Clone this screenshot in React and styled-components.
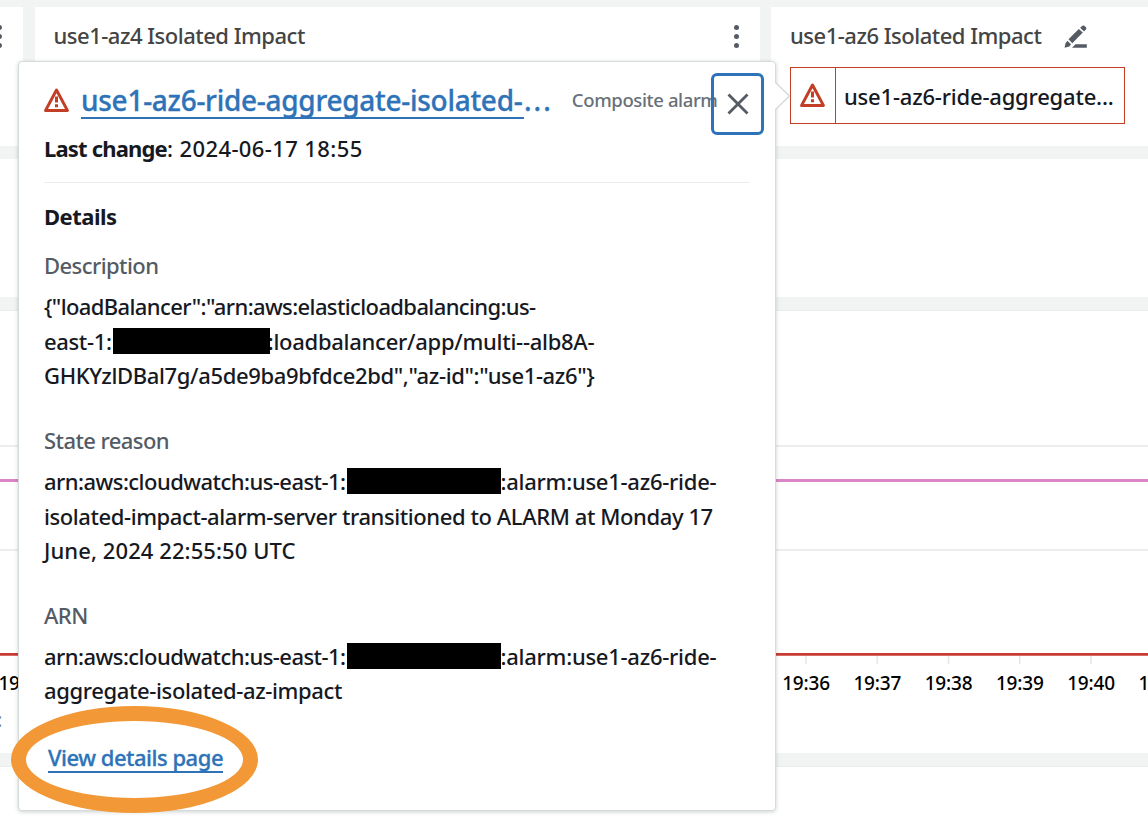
import React from "react";
import styled, { createGlobalStyle } from "styled-components";

const GlobalStyle = createGlobalStyle`
  * { box-sizing: border-box; }
  body {
    margin: 0;
    overflow: hidden;
    background: #f2f3f3;
    color: #16191f;
    font-family: "Noto Sans", "Open Sans", sans-serif;
    font-size: 22px;
    font-weight: 500;
  }
`;

const Page = styled.main`
  position: relative;
  width: 1148px;
  height: 830px;
  padding-top: 7px;
  overflow: hidden;
  display: flex;
  flex-direction: column;
  gap: 13px;
`;

const WidgetRow = styled.section`
  flex: none;
  display: grid;
  grid-template-columns: 23px 725px 377px;
  column-gap: 11.5px;
  height: 139px;
`;

const Widget = styled.article`
  background: #fff;
  padding: ${(p) => (p.$clipped ? "0" : "0 19px")};
  min-width: 0;
  overflow: hidden;
`;

const WidgetHeader = styled.header`
  display: flex;
  align-items: center;
  justify-content: ${(p) => (p.$spread ? "space-between" : "flex-start")};
  gap: 23px;
  height: 60px;
`;

const WidgetTitle = styled.h2`
  margin: 0 0 4px;
  font-size: 22px;
  font-weight: 500;
  line-height: 30px;
  letter-spacing: -0.49px;
  white-space: nowrap;
  color: #444;
`;

const Kebab = styled.span`
  display: flex;
  flex-direction: column;
  gap: 4px;
  margin: -2px 2px 0 ${(p) => (p.$edge ? "-3px" : "0")};

  i {
    width: 5px;
    height: 5px;
    border-radius: 50%;
    background: #545b64;
  }
`;

const AlarmButton = styled.button`
  display: grid;
  grid-template-columns: 45px 1fr;
  width: 335px;
  height: 57px;
  padding: 0;
  background: #fff;
  border: 1px solid #c23f25;
  color: #16191f;
  font: inherit;
`;

const AlarmState = styled.span`
  display: flex;
  align-items: center;
  justify-content: center;
  padding-bottom: 1px;
  border-right: 1px solid #c23f25;
`;

const AlarmName = styled.span`
  display: flex;
  align-items: center;
  padding-left: 8px;
  letter-spacing: -0.2px;
  white-space: nowrap;
`;

const Panel = styled.section`
  flex: none;
  height: ${(p) => p.$height}px;
  background: #fff;
  border-top: 1px solid ${(p) => (p.$edge ? "#eaeded" : "#fff")};
`;

const Plot = styled.svg`
  display: block;
`;

const TimeAxis = styled.div`
  display: flex;
  justify-content: space-between;
  width: 1211.25px;
  margin: 5px 0 0 -13.4px;
  font-size: 19px;
  line-height: 26px;
  letter-spacing: -0.2px;
  color: #000;
`;

const TickGroup = styled.div`
  display: flex;
`;

const TimeLabel = styled.span`
  width: 71.25px;
  text-align: center;
`;

const Legend = styled.div`
  margin: 11px 0 0 -3px;
  font-size: 19px;
  line-height: 26px;
  color: #777;
`;

const Popover = styled.aside`
  position: absolute;
  left: 18px;
  top: 61px;
  width: 758px;
  height: 750px;
  padding: 17px 25px 0 25px;
  background: #fff;
  border: 1px solid #d5dbdb;
  border-radius: 4px;
  box-shadow: 0 1px 4px rgba(0, 28, 36, 0.2);
`;

const PopoverArrow = styled.svg`
  position: absolute;
  left: 756px;
  top: 19px;
`;

const PopoverHeader = styled.header`
  display: flex;
  align-items: center;
  height: 42px;
`;

const AlarmHeading = styled.div`
  display: flex;
  margin-left: 11px;
  font-size: 28px;
  font-weight: 500;
  -webkit-text-stroke: 0.3px #2e73b8;
  color: #2e73b8;
`;

const AlarmLink = styled.a`
  width: 443px;
  height: 37px;
  line-height: 36px;
  letter-spacing: -0.28px;
  white-space: nowrap;
  border-bottom: 2px solid #2e73b8;
`;

const Ellipsis = styled.span`
  line-height: 36px;
  letter-spacing: 2px;
`;

const AlarmType = styled.span`
  margin: 0 0 2px 19px;
  font-size: 18.5px;
  letter-spacing: -0.38px;
  white-space: nowrap;
  color: #687078;
`;

const CloseButton = styled.button`
  position: absolute;
  left: 692px;
  top: 11px;
  display: flex;
  align-items: center;
  justify-content: center;
  width: 53px;
  height: 62px;
  padding: 0;
  background: none;
  border: 3px solid #2e73b8;
  border-radius: 6px;
`;

const LastChange = styled.p`
  margin: 0;
  height: 62px;
  padding-top: 12px;
  line-height: 30px;
  letter-spacing: 0.4px;
  border-bottom: 1px solid #eaeded;

  b {
    font-weight: 700;
    letter-spacing: -0.82px;
  }
`;

const DetailsHeading = styled.h3`
  margin: 18px 0 0;
  font-size: 22px;
  font-weight: 700;
  line-height: 30px;
  letter-spacing: -0.5px;
`;

const Field = styled.div`
  margin-top: ${(p) => p.$gap}px;
`;

const FieldLabel = styled.div`
  margin-bottom: 9px;
  line-height: 30px;
  letter-spacing: -0.57px;
  color: #545b64;
`;

const Line = styled.div`
  display: flex;
  align-items: center;
  height: 34.6px;
  white-space: nowrap;
`;

const Run = styled.span`
  letter-spacing: ${(p) => p.$tracking}px;
  width: ${(p) => (p.$width ? `${p.$width}px` : "auto")};
`;

const Redaction = styled.span`
  width: ${(p) => p.$width}px;
  height: 26px;
  background: #000;
  margin-right: ${(p) => p.$overlap || 0}px;
  z-index: 1;
`;

const DetailsLink = styled.a`
  display: block;
  width: 175px;
  height: 32px;
  margin: 33px 0 0 4px;
  line-height: 33px;
  letter-spacing: -0.48px;
  white-space: nowrap;
  -webkit-text-stroke: 0.3px #2e73b8;
  color: #2e73b8;
  border-bottom: 2px solid #2e73b8;
`;

const Highlight = styled.div`
  position: absolute;
  left: 11px;
  top: 706px;
  width: 247px;
  height: 107px;
  border: 15px solid #f29836;
  border-radius: 50%;
`;

const WarningIcon = () => (
  <svg width="26" height="26" viewBox="0 0 26 26" fill="none">
    <path d="M12.5 3 23.4 23.4H1.6Z" stroke="#c23f25" strokeWidth="3" strokeLinejoin="round" />
    <path d="M12.5 9.5v6M12.5 17.2v3" stroke="#c23f25" strokeWidth="3" />
  </svg>
);

const PencilIcon = () => (
  <svg width="24" height="24" viewBox="0 0 24 24" fill="#545b64">
    <path d="M4.5 14.2 14.8 4l4 3.6L8.3 18.2Z" />
    <path d="M16.2 2.8 18.3.8q1-.8 2 0l1.6 1.4q1 1 .1 2l-2 2.2Z" />
    <path d="M3.4 15.7 7 19.2 5.4 21.4.6 22.8 1.4 18.4Z" />
    <path d="M11.5 19.2H22.8v3.6H8Z" />
  </svg>
);

const CloseIcon = () => (
  <svg width="22" height="22" viewBox="0 0 22 22">
    <path d="m1.5 1.5 19 19m0-19-19 19" stroke="#545b64" strokeWidth="2.8" />
  </svg>
);

const Dots = ({ edge }) => (
  <Kebab $edge={edge}>
    <i />
    <i />
    <i />
  </Kebab>
);

const ticks = [806, 877.25, 948.5, 1019.75, 1091];
const times = ["19:36", "19:37", "19:38", "19:39", "19:40", "19:41"];

const MetricPlot = () => (
  <Plot width="1148" height="354" viewBox="0 311 1148 354">
    <path d="M0 446H1148M0 550H1148" stroke="#ededed" strokeWidth="2" />
    <path d="M0 480.5H1148" stroke="#da85c8" strokeWidth="2.8" />
    {ticks.map((x) => (
      <path key={x} d={`M${x} 656v8`} stroke="#e6e8e8" strokeWidth="1.6" />
    ))}
    <path d="M0 654.4H1148" stroke="#c93a35" strokeWidth="2.8" />
  </Plot>
);

export default function App() {
  return (
    <>
      <GlobalStyle />
      <Page>
        <WidgetRow>
          <Widget $clipped>
            <WidgetHeader>
              <Dots edge />
            </WidgetHeader>
          </Widget>
          <Widget>
            <WidgetHeader $spread>
              <WidgetTitle>use1-az4 Isolated Impact</WidgetTitle>
              <Dots />
            </WidgetHeader>
          </Widget>
          <Widget>
            <WidgetHeader>
              <WidgetTitle>use1-az6 Isolated Impact</WidgetTitle>
              <PencilIcon />
            </WidgetHeader>
            <AlarmButton>
              <AlarmState>
                <WarningIcon />
              </AlarmState>
              <AlarmName>use1-az6-ride-aggregate...</AlarmName>
            </AlarmButton>
          </Widget>
        </WidgetRow>
        <Panel $height={138} />
        <Panel $height={443} $edge>
          <MetricPlot />
          <TimeAxis>
            <TimeLabel>19:25</TimeLabel>
            <TickGroup>
              {times.map((t) => (
                <TimeLabel key={t}>{t}</TimeLabel>
              ))}
            </TickGroup>
          </TimeAxis>
          <Legend>:</Legend>
        </Panel>
        <Panel $height={80} $edge />

        <Popover>
          <PopoverArrow width="16" height="30" viewBox="0 0 16 30">
            <path d="M0 1 14.5 15 0 29" fill="#fff" stroke="#d5dbdb" strokeWidth="1.5" />
          </PopoverArrow>
          <PopoverHeader>
            <WarningIcon />
            <AlarmHeading>
              <AlarmLink>use1-az6-ride-aggregate-isolated-</AlarmLink>
              <Ellipsis>...</Ellipsis>
            </AlarmHeading>
            <AlarmType>Composite alarm</AlarmType>
          </PopoverHeader>
          <CloseButton aria-label="Close">
            <CloseIcon />
          </CloseButton>
          <LastChange>
            <b>Last change</b>: 2024-06-17 18:55
          </LastChange>
          <DetailsHeading>Details</DetailsHeading>
          <Field $gap={19}>
            <FieldLabel>Description</FieldLabel>
            <Line>
              <Run $tracking={-0.62}>{'{"loadBalancer":"arn:aws:elasticloadbalancing:us-'}</Run>
            </Line>
            <Line>
              <Run $tracking={-0.35} $width={68.7}>east-1:</Run>
              <Redaction $width={157} $overlap={-2} />
              <Run $tracking={-0.27}>:loadbalancer/app/multi--alb8A-</Run>
            </Line>
            <Line>
              <Run $tracking={-0.36}>{'GHKYzlDBal7g/a5de9ba9bfdce2bd","az-id":"use1-az6"}'}</Run>
            </Line>
          </Field>
          <Field $gap={32}>
            <FieldLabel>State reason</FieldLabel>
            <Line>
              <Run $tracking={-0.54} $width={302.5}>arn:aws:cloudwatch:us-east-1:</Run>
              <Redaction $width={154} />
              <Run $tracking={-0.26}>:alarm:use1-az6-ride-</Run>
            </Line>
            <Line>
              <Run $tracking={-0.41}>isolated-impact-alarm-server transitioned to ALARM at Monday 17</Run>
            </Line>
            <Line>
              <Run $tracking={0.08}>June, 2024 22:55:50 UTC</Run>
            </Line>
          </Field>
          <Field $gap={32}>
            <FieldLabel>ARN</FieldLabel>
            <Line>
              <Run $tracking={-0.54} $width={302.5}>arn:aws:cloudwatch:us-east-1:</Run>
              <Redaction $width={154} />
              <Run $tracking={-0.26}>:alarm:use1-az6-ride-</Run>
            </Line>
            <Line>
              <Run $tracking={-0.37}>aggregate-isolated-az-impact</Run>
            </Line>
          </Field>
          <DetailsLink>View details page</DetailsLink>
        </Popover>
        <Highlight />
      </Page>
    </>
  );
}
